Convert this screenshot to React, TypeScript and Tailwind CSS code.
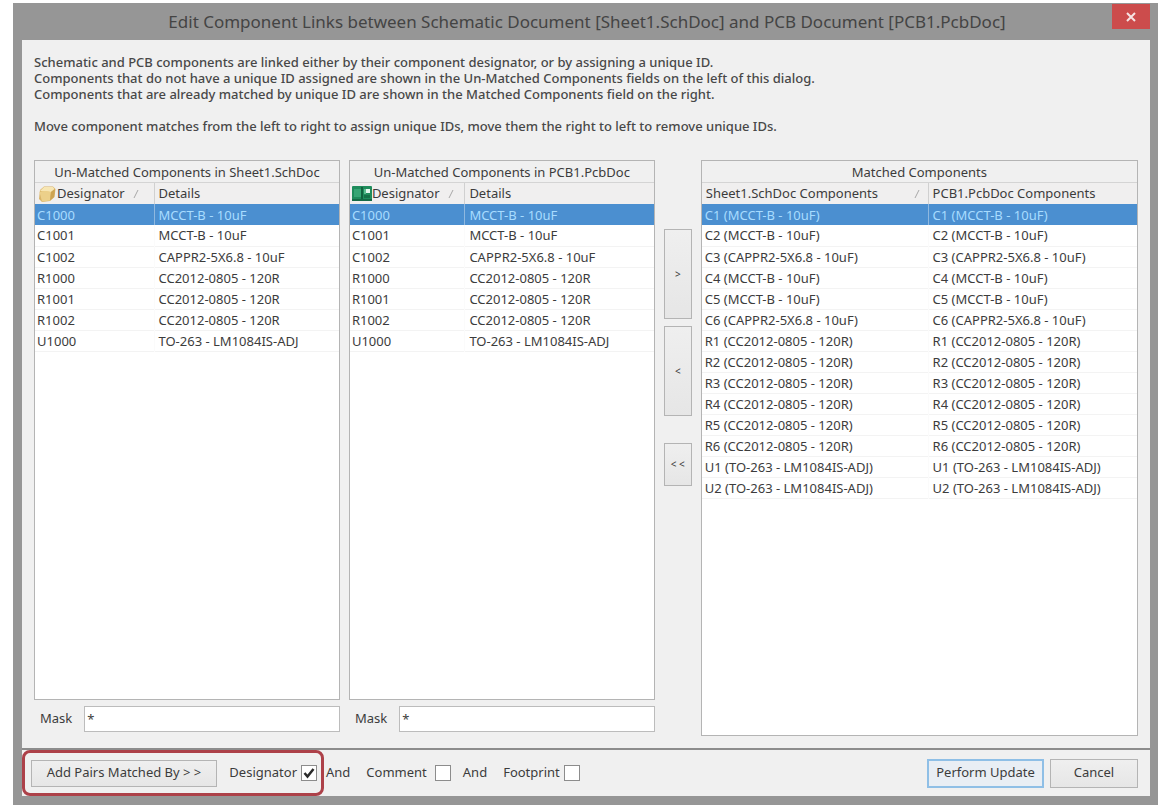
import { useState } from "react";

type Row = [string, string];

const unmatched: Row[] = [
  ["C1000", "MCCT-B - 10uF"],
  ["C1001", "MCCT-B - 10uF"],
  ["C1002", "CAPPR2-5X6.8 - 10uF"],
  ["R1000", "CC2012-0805 - 120R"],
  ["R1001", "CC2012-0805 - 120R"],
  ["R1002", "CC2012-0805 - 120R"],
  ["U1000", "TO-263 - LM1084IS-ADJ"],
];

const matched: Row[] = [
  "C1 (MCCT-B - 10uF)",
  "C2 (MCCT-B - 10uF)",
  "C3 (CAPPR2-5X6.8 - 10uF)",
  "C4 (MCCT-B - 10uF)",
  "C5 (MCCT-B - 10uF)",
  "C6 (CAPPR2-5X6.8 - 10uF)",
  "R1 (CC2012-0805 - 120R)",
  "R2 (CC2012-0805 - 120R)",
  "R3 (CC2012-0805 - 120R)",
  "R4 (CC2012-0805 - 120R)",
  "R5 (CC2012-0805 - 120R)",
  "R6 (CC2012-0805 - 120R)",
  "U1 (TO-263 - LM1084IS-ADJ)",
  "U2 (TO-263 - LM1084IS-ADJ)",
].map((t): Row => [t, t]);

function FolderIcon() {
  return (
    <svg width="20" height="18" viewBox="-1 0 20 18" className="shrink-0" aria-hidden="true">
      <path d="M2 5 L6 1.500 L15 1.500 L17.500 4 L16.500 12 L12 16 L4 17 L1 14 Z" fill="#d9b468" />
      <path d="M2 6 L6 2 L15 2 L16.500 4 L13 7 Z" fill="#f7e6b4" />
      <path d="M1.500 7 Q7 5 13 7 L12 15.500 L4 16.500 Z" fill="#ecd08a" />
      <path d="M13 7 L17 4 L16 12 L12 15.500 Z" fill="#cda453" />
    </svg>
  );
}

function BoardIcon() {
  return (
    <svg width="20" height="15" viewBox="0 0 20 15" className="shrink-0" aria-hidden="true">
      <rect width="20" height="15" rx="1" fill="#1f8c5c" />
      <rect x="2" y="3" width="7" height="8" fill="#36a574" />
      <rect x="9" y="1" width="2" height="13" fill="#12613e" />
      <rect x="14" y="3" width="4" height="4" fill="#e4f6ec" />
      <rect x="12" y="3" width="2" height="5" fill="#5cbd91" />
      <rect x="12" y="9" width="6" height="3" fill="#167048" />
      <rect y="13" width="20" height="2" fill="#156a45" />
    </svg>
  );
}

function SortMark() {
  return (
    <svg width="6" height="10" viewBox="0 0 6 10" className="shrink-0" aria-hidden="true">
      <path d="M1 9 L5 1" stroke="#a8a8a8" fill="none" />
    </svg>
  );
}

type PanelProps = {
  title: string;
  heads: [string, string];
  rows: Row[];
  icon?: React.ReactNode;
  firstCol: string;
  spread?: boolean;
};

function Panel({ title, heads, rows, icon, firstCol, spread }: PanelProps) {
  const [selected, setSelected] = useState(0);
  return (
    <div className="flex-1 border border-[#b4b4b4] bg-white">
      <table className="w-full table-fixed border-collapse text-left">
        <caption className="h-[22px] border-b border-[#d4d4d4] bg-[#f0f0f0] pt-px text-center leading-5">{title}</caption>
        <colgroup>
          <col className={firstCol} />
          <col />
        </colgroup>
        <thead>
          <tr className="h-[21px] bg-[#f0efef]">
            <th className="border-r border-[#d0d0d0] p-0 font-normal">
              <div className={`flex h-5 items-center whitespace-nowrap ${icon ? "pl-0.5" : "pl-1"} ${spread ? "justify-between pr-2" : "gap-2"}`}>
                <span className="flex items-center">
                  {icon}
                  {heads[0]}
                </span>
                <SortMark />
              </div>
            </th>
            <th className="py-0 pr-0 pl-1 font-normal whitespace-nowrap">{heads[1]}</th>
          </tr>
        </thead>
        <tbody>
          {rows.map((row, i) => (
            <tr
              key={row[0]}
              onClick={() => setSelected(i)}
              aria-selected={i === selected}
              className={
                i === selected
                  ? "h-[21px] bg-[#4b8fd0] text-[#a8dcff]"
                  : "h-[21px] border-b border-[#f3f3f3]"
              }
            >
              <td className={`border-r border-[#f4f4f4]/40 py-0 pr-0 leading-5 whitespace-nowrap ${spread ? "pl-[3px]" : "pl-0.5"}`}>{row[0]}</td>
              <td className="py-0 pr-0 pl-1 leading-5 whitespace-nowrap">{row[1]}</td>
            </tr>
          ))}
        </tbody>
      </table>
    </div>
  );
}

function Mask({ id }: { id: string }) {
  return (
    <div className="flex h-[26px] items-center gap-3 pl-1.5">
      <label htmlFor={id}>Mask</label>
      <input
        id={id}
        defaultValue="*"
        className="h-full min-w-0 flex-1 border border-[#bcbcbc] bg-white px-0.5 outline-none"
      />
    </div>
  );
}

function Check({ label, gap = "gap-1", checked = false }: { label: string; gap?: string; checked?: boolean }) {
  const [on, setOn] = useState(checked);
  return (
    <label className={`flex items-center ${gap}`}>
      {label}
      <span className="relative flex size-4">
        <input
          type="checkbox"
          checked={on}
          onChange={() => setOn(!on)}
          className="size-4 appearance-none border border-[#8c8c8c] bg-white"
        />
        {on && (
          <svg viewBox="0 0 16 16" className="pointer-events-none absolute inset-0 size-4" aria-hidden="true">
            <path d="M3.500 8 L6.500 11.500 L12.500 4" stroke="#2a2a2a" strokeWidth="2.500" fill="none" />
          </svg>
        )}
      </span>
    </label>
  );
}

const button = "border border-[#b4b4b4] bg-linear-to-b from-[#efefef] to-[#e6e6e6] whitespace-nowrap";

export default function App() {
  return (
    <main className="flex min-h-screen bg-white pt-[3px] pr-[9px] pb-[3px] pl-[13px] font-['Noto_Sans','Open_Sans',sans-serif] text-[13px] text-[#3c3c3c]">
      <section className="flex flex-1 flex-col bg-[#969696] pr-2 pb-[9px] pl-[9px]" aria-label="Edit Component Links">
        <header className="flex h-[37px] items-start">
          <h1 className="flex-1 pt-[5px] pl-10 text-center text-[17px] leading-7 whitespace-nowrap text-[#444444]">
            Edit Component Links between Schematic Document [Sheet1.SchDoc] and PCB Document [PCB1.PcbDoc]
          </h1>
          <button aria-label="Close" className="mt-px flex h-[25px] w-[38px] items-center justify-center bg-[#cc4c4c]">
            <svg width="10" height="10" viewBox="0 0 10 10" aria-hidden="true">
              <path d="M1 1 L9 9 M9 1 L1 9" stroke="#f6e4e4" strokeWidth="2" />
            </svg>
          </button>
        </header>

        <div className="flex flex-1 flex-col bg-[#f0f0f0] px-3 pt-3.5 pb-3">
          <div className="leading-4 font-medium text-[#484848]">
            <p>Schematic and PCB components are linked either by their component designator, or by assigning a unique ID.</p>
            <p>Components that do not have a unique ID assigned are shown in the Un-Matched Components fields on the left of this dialog.</p>
            <p>Components that are already matched by unique ID are shown in the Matched Components field on the right.</p>
            <p className="mt-4">Move component matches from the left to right to assign unique IDs, move them the right to left to remove unique IDs.</p>
          </div>

          <div className="mt-[26px] flex flex-1 gap-[9px]">
            <div className="flex flex-[305] flex-col gap-1.5">
              <Panel title="Un-Matched Components in Sheet1.SchDoc" heads={["Designator", "Details"]} rows={unmatched} icon={<FolderIcon />} firstCol="w-[119px]" />
              <div className="pb-1"><Mask id="mask-sch" /></div>
            </div>
            <div className="flex flex-[305] flex-col gap-1.5">
              <Panel title="Un-Matched Components in PCB1.PcbDoc" heads={["Designator", "Details"]} rows={unmatched} icon={<BoardIcon />} firstCol="w-[115px]" />
              <div className="pb-1"><Mask id="mask-pcb" /></div>
            </div>
            <div className="flex w-7 flex-col pt-[69px]">
              <button aria-label="Match selected" className={`h-[90px] text-[10px] ${button}`}>&gt;</button>
              <button aria-label="Unmatch selected" className={`mt-[7px] h-[90px] text-[10px] ${button}`}>&lt;</button>
              <button aria-label="Unmatch all" className={`mt-[27px] h-[43px] text-[10px] ${button}`}>&lt; &lt;</button>
            </div>
            <div className="flex flex-[436] flex-col">
              <Panel title="Matched Components" heads={["Sheet1.SchDoc Components", "PCB1.PcbDoc Components"]} rows={matched} firstCol="w-[52%]" spread />
            </div>
          </div>
        </div>

        <footer className="flex h-12 items-center border-t-2 border-[#8c8c8c] bg-[#f0f0f0] pr-3">
          <div className="flex h-full w-[302px] items-center justify-between rounded-lg border-3 border-[#ad4149] pr-1 pl-1.5">
            <button className={`h-[27px] w-[186px] ${button}`}>Add Pairs Matched By &gt; &gt;</button>
            <Check label="Designator" checked />
          </div>
          <span className="ml-0.5">And</span>
          <div className="ml-4"><Check label="Comment" gap="gap-2" /></div>
          <span className="ml-3">And</span>
          <div className="ml-4"><Check label="Footprint" /></div>
          <button className="ml-auto h-[29px] w-[117px] border-2 border-[#8fbfe6] bg-[#e9eef4] whitespace-nowrap">Perform Update</button>
          <button className={`ml-1.5 h-[29px] w-[88px] ${button}`}>Cancel</button>
        </footer>
      </section>
    </main>
  );
}
